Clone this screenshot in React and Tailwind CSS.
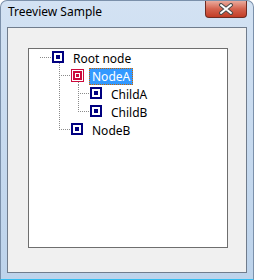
import React from 'react';

const rows = [
  { label: 'Root node', cells: ['h'], kids: true },
  { label: 'NodeA', cells: ['', 'tee'], kids: true, selected: true },
  { label: 'ChildA', cells: ['', 'pipe', 'tee'] },
  { label: 'ChildB', cells: ['', 'pipe', 'end'] },
  { label: 'NodeB', cells: ['', 'end'] },
];

const dot = { stroke: '#8a8a8a', strokeWidth: 1, strokeDasharray: '1 1' };

const Cell = ({ type }) => (
  <svg width="19" height="18" className="shrink-0 block">
    {(type === 'pipe' || type === 'tee') && <line x1="7.5" y1="0" x2="7.5" y2="18" {...dot} />}
    {type === 'end' && <line x1="7.5" y1="0" x2="7.5" y2="9" {...dot} />}
    {(type === 'tee' || type === 'end' || type === 'h') && <line x1="7" y1="8.5" x2="19" y2="8.5" {...dot} />}
  </svg>
);

const StateBox = ({ selected, kids }) => (
  <svg width="13" height="18" className="shrink-0 block">
    {selected ? (
      <>
        <rect x="0.5" y="2.5" width="12" height="12" fill="#fff" stroke="#cc0a3c" strokeWidth="1" />
        <rect x="3" y="5" width="7" height="7" fill="#fff" stroke="#cc0a3c" strokeWidth="2" />
        <rect x="5" y="7" width="3" height="3" fill="#cc0a3c" />
      </>
    ) : (
      <>
        <rect x="1" y="3" width="10" height="10" fill="#fff" stroke="#000080" strokeWidth="2" />
        <rect x="4" y="6" width="4" height="4" fill="#000080" />
      </>
    )}
    {kids && <line x1="7.5" y1={selected ? 15 : 14} x2="7.5" y2="18" {...dot} />}
  </svg>
);

export default function App() {
  return (
    <div className="w-[254px] h-[280px] flex flex-col rounded-t-[7px] border border-[#7b90aa] border-b-[#33bdf0] bg-gradient-to-b from-[#d3e2f3] via-[#c7daef] to-[#bdd3eb]" style={{ fontFamily: '"Noto Sans", "Open Sans", sans-serif' }}>
      <div className="h-[26px] flex items-start shrink-0">
        <span className="pl-[7px] pt-[3px] text-[12px] leading-[16px] text-black">Treeview Sample</span>
        <div className="ml-auto mr-[6px] w-[42px] h-[17px] rounded-b-[4px] border border-t-0 border-[#6e2b22] bg-gradient-to-b from-[#e9aa9d] via-[#d4624e] to-[#c23c24] flex items-center justify-center">
          <svg width="16" height="12" viewBox="0 0 16 12">
            <path d="M3 2 L13 10 M13 2 L3 10" stroke="#4b4b4b" strokeWidth="4" strokeLinecap="round" />
            <path d="M3 2 L13 10 M13 2 L3 10" stroke="#ffffff" strokeWidth="2" strokeLinecap="round" />
          </svg>
        </div>
      </div>
      <div className="mx-[6px] h-[246px] shrink-0 border border-[#707c8c] bg-[#f0f0f0] pl-[20px] pt-[20px]">
        <div className="w-[200px] h-[200px] border border-[#6e6e6e] bg-white pl-[4px]">
          {rows.map((r) => (
            <div key={r.label} className="h-[18px] flex items-center">
              {r.cells.map((c, i) => (
                <Cell key={i} type={c} />
              ))}
              <StateBox selected={r.selected} kids={r.kids} />
              <span
                className={`ml-[5px] h-[17px] px-[2px] border text-[12px] leading-[15px] whitespace-nowrap ${
                  r.selected ? 'bg-[#3399ff] text-white border-dotted border-[#cc6600]' : 'border-transparent text-black'
                }`}
              >
                {r.label}
              </span>
            </div>
          ))}
        </div>
      </div>
    </div>
  );
}
